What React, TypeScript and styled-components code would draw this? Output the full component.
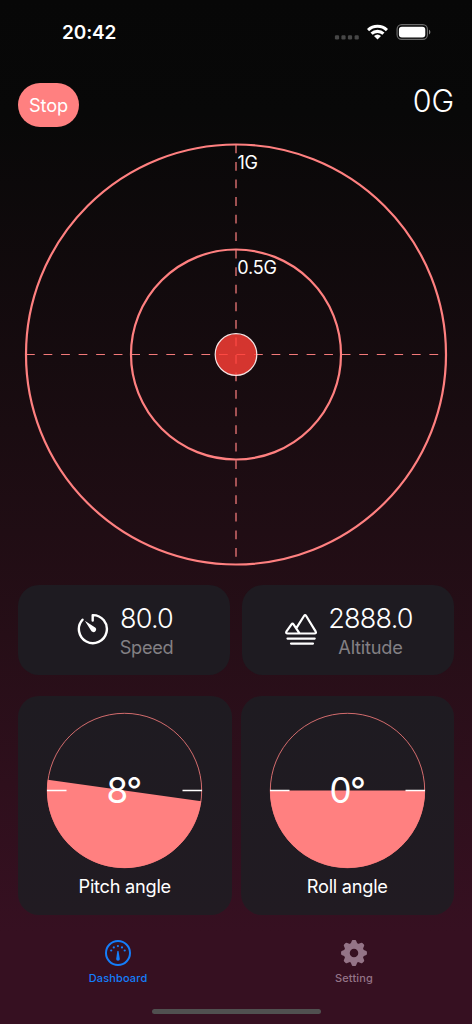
import React from 'react';
import styled, { createGlobalStyle } from 'styled-components';

const coral = '#ff8080';

const GlobalStyle = createGlobalStyle`
  * { box-sizing: border-box; }
  body { margin: 0; background: #080808; }
`;

const Screen = styled.div`
  width: 472px;
  height: 1024px;
  display: flex;
  flex-direction: column;
  overflow: hidden;
  color: #fff;
  font-family: Inter, "Liberation Sans", sans-serif;
  background: linear-gradient(180deg, #070707 0%, #080808 11%, #1a0c11 42%, #260e17 62%, #361021 91%, #361021 100%);
  svg { display: block; flex: none; }
`;

const StatusBar = styled.header`
  height: 83px;
  padding: 21px 41px 0 62px;
  display: flex;
  justify-content: space-between;
  align-items: flex-start;
`;

const Time = styled.span`
  font-size: 19px;
  line-height: 24px;
  font-weight: 600;
  letter-spacing: -0.12px;
`;

const TopRow = styled.div`
  height: 44px;
  padding: 0 18px;
  display: flex;
  justify-content: space-between;
`;

const StopButton = styled.button`
  width: 61px;
  height: 44px;
  padding: 0;
  border: 0;
  border-radius: 22px;
  background: ${coral};
  color: #fff;
  font: 400 18.2px/43px Inter, sans-serif;
  letter-spacing: -0.1px;
`;

const Force = styled.span`
  font-size: 30.5px;
  line-height: 35px;
  font-weight: 300;
  letter-spacing: -0.1px;
`;

const Radar = styled.svg`
  width: 472px;
  height: 458px;
`;

const ScaleLabel = styled.text`
  fill: #fff;
  font-size: 18px;
  letter-spacing: -0.2px;
`;

const Stats = styled.section`
  display: grid;
  grid-template-columns: 212px 212px;
  justify-content: space-between;
  padding: 0 18px;
`;

const Angles = styled(Stats)`
  grid-template-columns: 213.5px 213.5px;
  margin-top: 21px;
`;

const Card = styled.article`
  border-radius: 21px;
  background: #1e1b21;
`;

const StatCard = styled(Card)`
  height: 90px;
  display: flex;
  justify-content: center;
  gap: 11px;
  padding-left: 2px;
`;

const StatIcon = styled.div`
  padding-top: 28px;
`;

const StatText = styled.div`
  display: flex;
  flex-direction: column;
  align-items: center;
  padding-top: 17px;
`;

const StatValue = styled.span`
  font-size: 27px;
  line-height: 33px;
  letter-spacing: -0.75px;
  font-weight: 350;
`;

const StatName = styled.span<{ $spacing: number }>`
  font-size: 18.2px;
  line-height: 24px;
  color: #838084;
  letter-spacing: ${(p) => p.$spacing}px;
`;

const AngleCard = styled(Card)`
  height: 219px;
  display: flex;
  flex-direction: column;
  align-items: center;
  padding-top: 16px;
  background: linear-gradient(180deg, #1e1b21, #211b22);
`;

const AngleValue = styled.text`
  fill: #fff;
  font-size: 35px;
  font-weight: 380;
  letter-spacing: -1.5px;
`;

const AngleName = styled.span`
  margin-top: 5px;
  font-size: 18.2px;
  line-height: 24px;
  letter-spacing: -0.25px;
`;

const Tabs = styled.nav`
  display: grid;
  grid-template-columns: 1fr 1fr;
  height: 94px;
  padding-top: 24px;
`;

const Tab = styled.div<{ $active?: boolean }>`
  display: flex;
  flex-direction: column;
  align-items: center;
  gap: 3px;
  color: ${(p) => (p.$active ? '#147efb' : '#947487')};
  font-size: 11px;
  line-height: 16px;
  font-weight: 550;
  letter-spacing: 0.15px;
`;

const HomeIndicator = styled.div`
  width: 169px;
  height: 5px;
  margin: 0 auto;
  border-radius: 3px;
  background: #505050;
`;

function StatusIcons() {
  return (
    <svg width="97" height="24" viewBox="334 21 97 24" fill="none">
      {[337, 343.5, 350, 356.7].map((x) => (
        <rect key={x} x={x - 2.1} y="35.3" width="4.2" height="4.2" rx="1.2" fill="#474747" />
      ))}
      <path d="M367 28.9a15.2 15.2 0 0 1 21 0l-2.1 2.3a12.1 12.1 0 0 0-16.8 0z" fill="#fff" />
      <path d="M370.5 32.5a10.2 10.2 0 0 1 14 0l-2.1 2.3a7.2 7.2 0 0 0-9.8 0z" fill="#fff" />
      <path d="M374 36.1a5.2 5.2 0 0 1 7 0l-3.5 3.5z" fill="#fff" />
      <rect x="397.1" y="24.6" width="30.3" height="14.8" rx="4.6" stroke="#6b6b6b" strokeWidth="1.2" />
      <rect x="398.9" y="26.7" width="26.4" height="10.8" rx="3" fill="#fff" />
      <path d="M429 29.7c1.8.7 1.8 3.9 0 4.7z" fill="#858585" />
    </svg>
  );
}

function ForceRadar() {
  return (
    <Radar viewBox="0 127 472 458" fill="none">
      <g stroke={coral} strokeDasharray="8.77 8.77">
        <path d="M236 144.5V564.5" strokeWidth="2" opacity=".6" />
        <path d="M26 354.5H446" strokeWidth="1" opacity=".95" />
      </g>
      <g stroke={coral} strokeWidth="2.2">
        <circle cx="236" cy="354.5" r="210" />
        <circle cx="236" cy="354.5" r="105" />
      </g>
      <ScaleLabel x="237.5" y="168.8">1G</ScaleLabel>
      <ScaleLabel x="237.3" y="273.8">0.5G</ScaleLabel>
      <circle cx="236" cy="354.5" r="20.8" fill="#ff3e37" fillOpacity=".82" stroke="#f5e4e4" strokeWidth="1.2" />
    </Radar>
  );
}

function TimerIcon() {
  return (
    <svg width="32" height="32" viewBox="0 0 32 32" fill="none">
      <path d="M15.7 7.5V2.1A14 14 0 1 1 5.5 6.7" stroke="#fff" strokeWidth="2.4" strokeLinejoin="round" strokeLinecap="round" />
      <path d="M8.3 8.5q-.7-.8.3-.3l8.8 5.7a2.7 2.7 0 1 1-3.4 3.6z" fill="#fff" />
    </svg>
  );
}

function MountainIcon() {
  return (
    <svg width="32" height="32" viewBox="0 0 32 32" fill="none" stroke="#fff" strokeWidth="2.2" strokeLinecap="round" strokeLinejoin="round">
      <path d="M2.6 20.5h26.8q2.2 0 1.2-2.1L21.2 3q-1.1-1.6-2.2 0l-7.2 11.4M14.2 19.8 8.5 11.3q-1-1.4-2 0L1.5 18.4q-1 2.1 1.1 2.1" />
      <path d="M2.5 25.6h27.2M6 30.6h22" />
    </svg>
  );
}

function GaugeIcon() {
  return (
    <svg width="28" height="28" viewBox="0 0 28 28" fill="none">
      <circle cx="14" cy="14" r="12" stroke="currentColor" strokeWidth="2" />
      <g fill="currentColor">
        <circle cx="7.2" cy="11.5" r="1.1" />
        <circle cx="9.8" cy="8.4" r="1.1" />
        <circle cx="13.9" cy="7.1" r="1.1" />
        <circle cx="18" cy="8.4" r="1.1" />
        <circle cx="20.7" cy="11.5" r="1.1" />
        <path d="M13.3 12.2q.7-1 1.3 0l1.2 7.9q.1 1.7-1.8 1.7t-1.8-1.7z" />
      </g>
    </svg>
  );
}

function GearIcon() {
  const teeth = [0, 45, 90, 135, 180, 225, 270, 315];
  return (
    <svg width="28" height="28" viewBox="-.3 -.3 28.6 28.6" fill="none">
      <circle cx="14" cy="14" r="7.35" stroke="currentColor" strokeWidth="6" />
      {teeth.map((a) => (
        <path
          key={a}
          transform={`rotate(${a} 14 14)`}
          d="M10.3 5.2 11.6 2q.3-1.2 1.3-1.2h2.2q1 0 1.3 1.2l1.3 3.2z"
          fill="currentColor"
        />
      ))}
    </svg>
  );
}

function Horizon({ degrees }: { degrees: number }) {
  return (
    <svg width="157" height="157" viewBox="-78.5 -78.5 157 157" fill="none">
      <path d="M-77.5 0A77.5 77.5 0 0 0 77.5 0Z" fill={coral} transform={`rotate(${degrees})`} />
      <circle r="77.2" stroke={coral} strokeOpacity=".8" />
      <path d="M-77.5 0h19.5M58 0h19.5" stroke="#fff" strokeWidth="1.3" />
      <AngleValue x="-18" y="12.6">{degrees}°</AngleValue>
    </svg>
  );
}

export default function App() {
  return (
    <>
      <GlobalStyle />
      <Screen>
        <StatusBar>
          <Time>20:42</Time>
          <StatusIcons />
        </StatusBar>
        <TopRow>
          <StopButton>Stop</StopButton>
          <Force>0G</Force>
        </TopRow>
        <ForceRadar />
        <Stats>
          <StatCard>
            <StatIcon><TimerIcon /></StatIcon>
            <StatText>
              <StatValue>80.0</StatValue>
              <StatName $spacing={-0.35}>Speed</StatName>
            </StatText>
          </StatCard>
          <StatCard>
            <StatIcon><MountainIcon /></StatIcon>
            <StatText>
              <StatValue>2888.0</StatValue>
              <StatName $spacing={-0.2}>Altitude</StatName>
            </StatText>
          </StatCard>
        </Stats>
        <Angles>
          <AngleCard>
            <Horizon degrees={8} />
            <AngleName>Pitch angle</AngleName>
          </AngleCard>
          <AngleCard>
            <Horizon degrees={0} />
            <AngleName>Roll angle</AngleName>
          </AngleCard>
        </Angles>
        <Tabs>
          <Tab $active>
            <GaugeIcon />
            Dashboard
          </Tab>
          <Tab>
            <GearIcon />
            Setting
          </Tab>
        </Tabs>
        <HomeIndicator />
      </Screen>
    </>
  );
}
